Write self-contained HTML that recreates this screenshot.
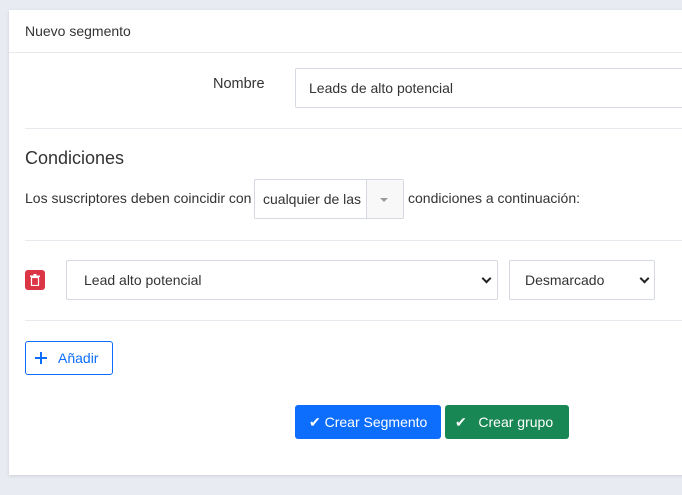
<!DOCTYPE html>
<html><head><meta charset="utf-8"><style>
*{box-sizing:border-box;margin:0;padding:0}
body{width:682px;height:495px;background:#e8ebf2;font-family:"Liberation Sans",sans-serif;font-size:14px;color:#333;position:relative;overflow:hidden}
.card{position:absolute;left:9px;top:10px;width:690px;height:465px;background:#fff;box-shadow:0 1px 3px rgba(0,0,0,.12)}
.a{position:absolute;white-space:nowrap}
.line{position:absolute;height:1px;background:#e7e9ee}
.box{position:absolute;border:1px solid #d5d9e2;background:#fff;border-radius:2px}
.chev{position:absolute;width:7px;height:7px;border-right:2px solid #222;border-bottom:2px solid #222;transform:rotate(45deg)}
.btn{position:absolute;border-radius:3px;color:#fff;font-size:14px;display:flex;align-items:center}
</style></head><body>
<div class="card"></div>
<div class="a" style="left:25px;top:23px">Nuevo segmento</div>
<div class="line" style="left:9px;right:0;top:52px"></div>
<div class="a" style="left:213px;top:76px;font-size:14.5px">Nombre</div>
<div class="box" style="left:295px;top:68px;width:400px;height:40px"></div>
<div class="a" style="left:309px;top:80px">Leads de alto potencial</div>
<div class="line" style="left:25px;right:0;top:128px"></div>
<div class="a" style="left:25px;top:148px;font-size:18px;color:#333">Condiciones</div>
<div class="a" style="left:25px;top:190px">Los suscriptores deben coincidir con</div>
<div class="box" style="left:254px;top:179px;width:150px;height:40px"></div>
<div class="a" style="left:263px;top:191px">cualquier de las</div>
<div style="position:absolute;left:366px;top:180px;width:37px;height:38px;background:#f8f8f9;border-left:1px solid #d5d9e2"></div>
<div style="position:absolute;left:380px;top:198px;border-left:4px solid transparent;border-right:4px solid transparent;border-top:4px solid #999"></div>
<div class="a" style="left:408px;top:190px">condiciones a continuación:</div>
<div class="line" style="left:25px;right:0;top:240px"></div>
<div style="position:absolute;left:25px;top:270px;width:20px;height:20px;background:#dc3545;border-radius:3px"></div>
<svg style="position:absolute;left:30px;top:274px" width="10" height="12" viewBox="0 0 10 12"><rect x="0" y="1.5" width="10" height="1.5" fill="#fff"/><rect x="3.5" y="0" width="3" height="2" fill="#fff"/><rect x="1.5" y="3.5" width="7" height="8" fill="none" stroke="#fff" stroke-width="1.2"/></svg>
<div class="box" style="left:66px;top:260px;width:432px;height:40px"></div>
<div class="a" style="left:84px;top:272px">Lead alto potencial</div>
<div class="chev" style="left:483px;top:275px"></div>
<div class="box" style="left:509px;top:260px;width:146px;height:40px"></div>
<div class="a" style="left:525px;top:272px">Desmarcado</div>
<div class="chev" style="left:641px;top:275px"></div>
<div class="line" style="left:25px;right:0;top:320px"></div>
<div style="position:absolute;left:25px;top:341px;width:88px;height:34px;border:1px solid #0d6efd;border-radius:3px"></div>
<svg style="position:absolute;left:35px;top:352px" width="12" height="12" viewBox="0 0 12 12"><path d="M6 0V12M0 6H12" stroke="#0d6efd" stroke-width="2"/></svg>
<div class="a" style="left:58px;top:350px;color:#0d6efd;font-size:14px">Añadir</div>
<div class="btn" style="left:295px;top:405px;width:146px;height:34px;background:#0d6efd;padding-left:14px">✔ Crear Segmento</div>
<div class="btn" style="left:445px;top:405px;width:124px;height:34px;background:#198754;padding-left:10px">✔&nbsp;&nbsp;&nbsp;Crear grupo</div>
</body></html>
